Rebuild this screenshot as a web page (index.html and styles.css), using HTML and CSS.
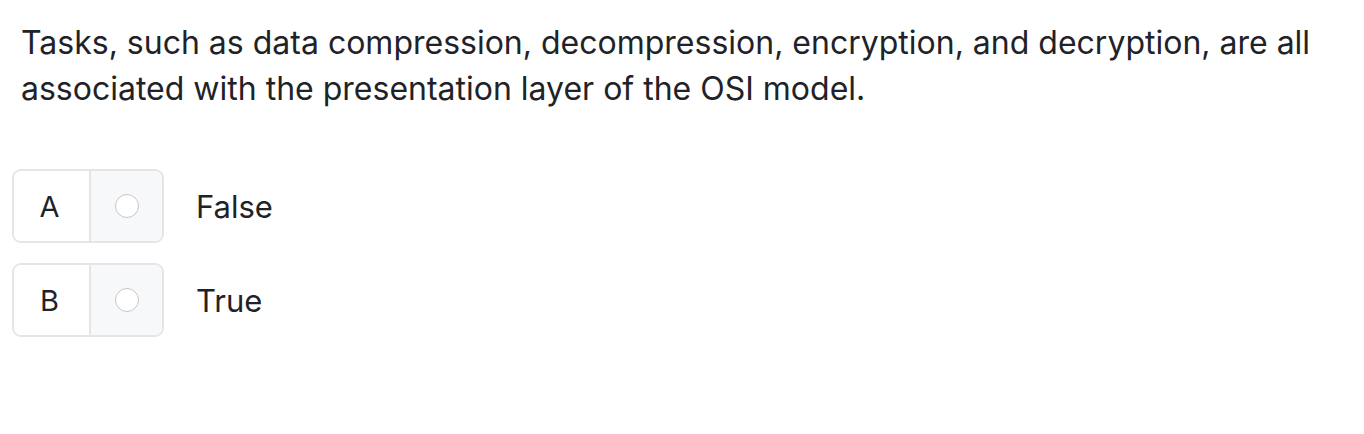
FILE: index.html
```html
<!DOCTYPE html>
<html>
<head>
<meta charset="utf-8">
<link rel="stylesheet" href="styles.css">
</head>
<body>
<div class="question">
  <p class="prompt">Tasks, such as data compression, decompression, encryption, and decryption, are all associated with the presentation layer of the OSI model.</p>
  <div class="options">
    <div class="option">
      <div class="box">
        <div class="letter">A</div>
        <div class="radio-cell"><span class="radio"></span></div>
      </div>
      <div class="label">False</div>
    </div>
    <div class="option">
      <div class="box">
        <div class="letter">B</div>
        <div class="radio-cell"><span class="radio"></span></div>
      </div>
      <div class="label">True</div>
    </div>
  </div>
</div>
</body>
</html>
```
FILE: styles.css
```css
html, body {
  margin: 0;
  padding: 0;
  background: #ffffff;
}
body {
  font-family: Inter, "Liberation Sans", Arial, sans-serif;
  color: #1f2328;
}
.question {
  padding: 20px 12px 0 12px;
}
.prompt {
  margin: 0 0 0 9px;
  font-size: 32px;
  line-height: 46px;
  max-width: 1310px;
}
.options {
  margin-top: 57px;
  display: flex;
  flex-direction: column;
  gap: 20px;
}
.option {
  display: flex;
  align-items: center;
}
.box {
  display: flex;
  width: 152px;
  height: 74px;
  box-sizing: border-box;
  border: 2px solid #e3e5e8;
  border-radius: 9px;
  overflow: hidden;
}
.letter {
  width: 77px;
  box-sizing: border-box;
  padding-right: 4px;
  display: flex;
  align-items: center;
  justify-content: center;
  font-size: 29px;
  background: #fff;
  border-right: 2px solid #e3e5e8;
}
.radio-cell {
  flex: 1;
  display: flex;
  align-items: center;
  justify-content: center;
  background: #f7f8fa;
}
.radio {
  width: 24px;
  height: 24px;
  border-radius: 50%;
  border: 1px solid #c4c6c9;
  background: #fff;
  box-sizing: border-box;
}
.label {
  margin-left: 32px;
  font-size: 31px;
}
```
